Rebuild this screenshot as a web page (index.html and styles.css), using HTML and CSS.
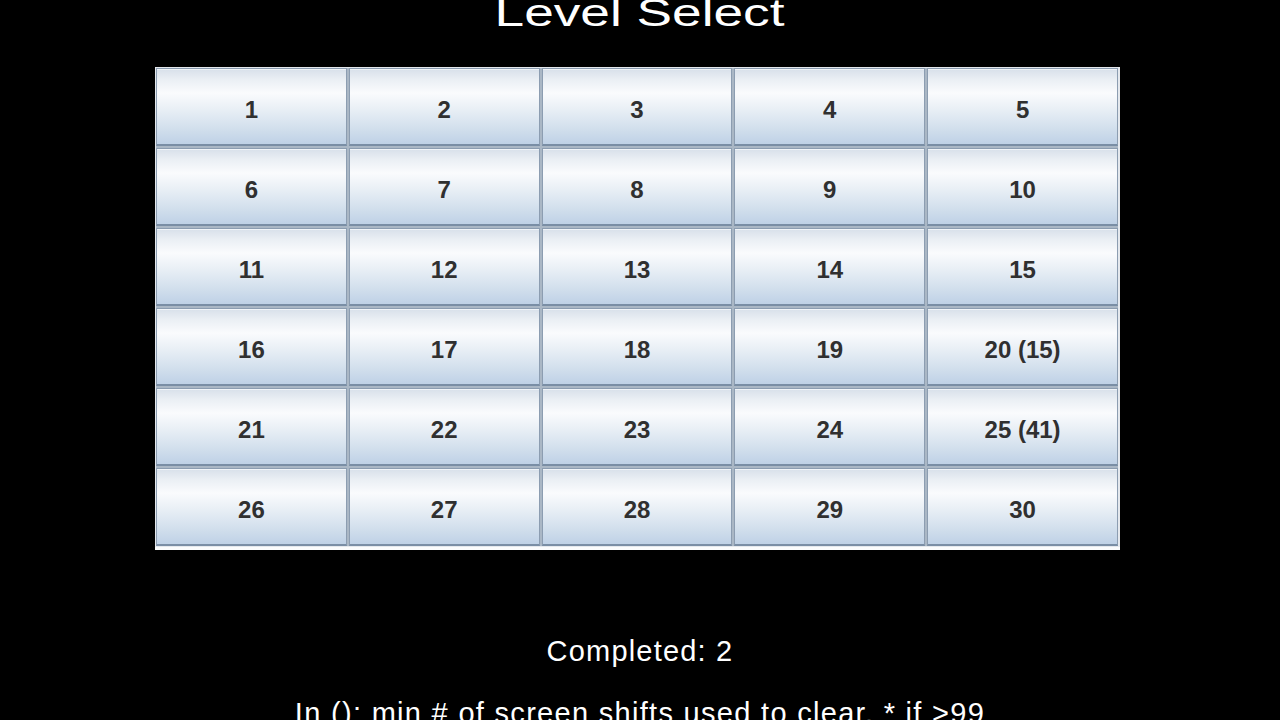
FILE: index.html
```html
<!DOCTYPE html>
<html>
<head>
<meta charset="utf-8">
<link rel="stylesheet" href="styles.css">
</head>
<body>
<div class="page">
  <h1 class="title"><span class="title-text">Level Select</span></h1>
  <div class="panel">
    <div class="grid">
      <div class="btn">1</div><div class="btn">2</div><div class="btn">3</div><div class="btn">4</div><div class="btn">5</div>
      <div class="btn">6</div><div class="btn">7</div><div class="btn">8</div><div class="btn">9</div><div class="btn">10</div>
      <div class="btn">11</div><div class="btn">12</div><div class="btn">13</div><div class="btn">14</div><div class="btn">15</div>
      <div class="btn">16</div><div class="btn">17</div><div class="btn">18</div><div class="btn">19</div><div class="btn">20 (15)</div>
      <div class="btn">21</div><div class="btn">22</div><div class="btn">23</div><div class="btn">24</div><div class="btn">25 (41)</div>
      <div class="btn">26</div><div class="btn">27</div><div class="btn">28</div><div class="btn">29</div><div class="btn">30</div>
    </div>
  </div>
  <p class="completed">Completed: 2</p>
  <p class="note">In (): min # of screen shifts used to clear. * if &gt;99</p>
</div>
</body>
</html>
```
FILE: styles.css
```css
html, body {
  margin: 0;
  padding: 0;
  background: #000;
  height: 100%;
  overflow: hidden;
}
.page {
  display: flex;
  flex-direction: column;
  font-family: "Liberation Sans", Arial, sans-serif;
  color: #fff;
}
.title {
  margin: -14px 0 0 0;
  font-size: 38px;
  line-height: 54px;
  font-weight: normal;
  text-align: center;
}
.title-text {
  display: inline-block;
  transform: scaleX(1.4);
  transform-origin: 50% 50%;
}
.panel {
  margin: 27px 0 0 155px;
  width: 962px;
  padding: 1px 2px 4px 1px;
  background: #e4e8ed;
  box-shadow: inset 0 -3px 0 #fafbfc;
}
.grid {
  display: grid;
  grid-template-columns: repeat(5, 1fr);
  grid-auto-rows: 78px;
  gap: 2px;
  background: #aab7c5;
}
.btn {
  display: flex;
  align-items: center;
  justify-content: center;
  padding-top: 7px;
  box-sizing: border-box;
  border: 1px solid #8c9db1;
  border-bottom-color: #7a8ea5;
  border-bottom-width: 2px;
  background: linear-gradient(to bottom, #d8e0ea 0%, #eaeff4 14%, #fafbfd 32%, #eaf0f6 52%, #d3e0ed 78%, #bfd1e6 100%);
  box-shadow: inset 0 1px 0 #f0f4f8;
  color: #303030;
  font-size: 24px;
  font-weight: bold;
}
.completed {
  margin: 85px 0 0 0;
  font-size: 29px;
  line-height: 32px;
  letter-spacing: 1.2px;
  text-align: center;
}
.note {
  margin: 30px 0 0 0;
  font-size: 29px;
  line-height: 32px;
  letter-spacing: 1.3px;
  text-align: center;
}
```
